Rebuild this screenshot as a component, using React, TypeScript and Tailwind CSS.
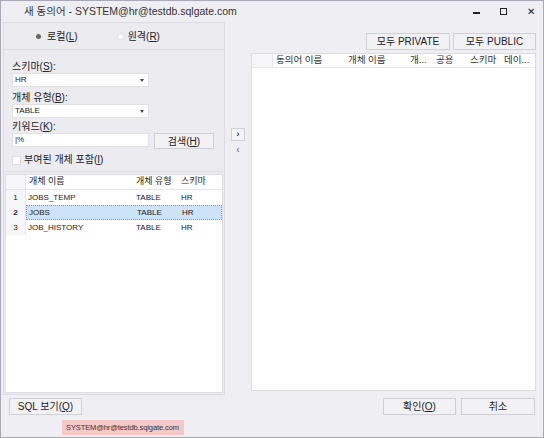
import React from "react";

const ko = "font-[family-name:'Liberation_Sans','Noto_Sans_CJK_KR',sans-serif]";

function Btn({ children, className = "" }: { children: React.ReactNode; className?: string }) {
  return (
    <div
      className={`flex items-center justify-center border border-[#cfcfd6] bg-[#f2f2f5] text-[10px] text-[#222] ${className}`}
    >
      <span>{children}</span>
    </div>
  );
}

function Select({ value }: { value: string }) {
  return (
    <div className="flex h-[14px] w-[137px] items-center justify-between border border-[#e2e2e6] bg-white pl-[2px] pr-[4px] text-[8px] text-[#222]">
      <span>{value}</span>
      <span className="mt-[1px] h-0 w-0 border-x-[2.5px] border-t-[3px] border-x-transparent border-t-[#444]" />
    </div>
  );
}

const leftRows = [
  { n: 1, name: "JOBS_TEMP", type: "TABLE", schema: "HR" },
  { n: 2, name: "JOBS", type: "TABLE", schema: "HR", sel: true },
  { n: 3, name: "JOB_HISTORY", type: "TABLE", schema: "HR" },
];

export default function App() {
  return (
    <div className={`flex h-[438px] w-[544px] flex-col border border-[#a9a9b6] bg-[#efeff3] ${ko}`}>
      {/* title bar */}
      <div className="flex h-[21px] items-center text-[10.5px] text-[#333]">
        <span className="ml-[23px]">새 동의어 - SYSTEM@hr@testdb.sqlgate.com</span>
        <div className="ml-auto flex items-center">
          <span className="mr-[20px] mt-[2px] h-[2px] w-[7px] bg-[#222]" />
          <span className="mr-[20px] h-[7px] w-[7px] border border-[#222]" />
          <span className="mr-[8px] text-[10px] leading-none text-[#222]">✕</span>
        </div>
      </div>

      {/* body */}
      <div className="flex h-[373px] pl-[2px]">
        {/* left panel */}
        <div className="flex w-[222px] flex-col border border-[#dcdce2] bg-[#ececf0]">
          <div className="flex h-[27px] shrink-0 items-center border-b border-[#dcdce2] text-[10px] text-[#222]">
            <span className="ml-[32px] flex items-center gap-[6px]">
              <span className="h-[5px] w-[5px] rounded-full bg-[#666]" />
              <span>
                로컬(<u>L</u>)
              </span>
            </span>
            <span className="ml-[39px] flex items-center gap-[4px]">
              <span className="h-[7px] w-[7px] rounded-full border border-[#ddd] bg-white" />
              <span>
                원격(<u>R</u>)
              </span>
            </span>
          </div>
          <div className="mx-[1px] mt-[1px] flex shrink-0 flex-col border-b border-[#dcdce2] px-[7px] pb-[5px] pt-[10px] text-[10px] text-[#222]">
            <span className="leading-[12px]">
              스키마(<u>S</u>):
            </span>
            <Select value="HR" />
            <span className="mt-[5px] leading-[12px]">
              개체 유형(<u>B</u>):
            </span>
            <Select value="TABLE" />
            <span className="mt-[3px] leading-[12px]">
              키워드(<u>K</u>):
            </span>
            <div className="flex h-[16px] items-start gap-[5px]">
              <div className="flex h-[14px] w-[137px] items-center border border-[#e2e2e6] bg-white pl-[2px] text-[8px]">
                |%
              </div>
              <Btn className="h-[16px] w-[60px]">
                검색(<u>H</u>)
              </Btn>
            </div>
            <div className="mt-[5px] flex h-[12px] items-center gap-[3px] leading-[12px]">
              <span className="h-[9px] w-[9px] border border-[#ddd] bg-white" />
              <span>
                부여된 개체 포함(<u>I</u>)
              </span>
            </div>
          </div>
          <div className="mx-[1px] mb-[1px] mt-[2px] flex-1 border border-[#dcdce2] bg-white text-[8px] text-[#222]">
            <div className="flex h-[15px] items-center border-b border-[#e6e6ea] text-[9px]">
              <span className="h-full w-[20px] border-r border-[#e6e6ea] bg-[#f6f6f8]" />
              <span className="w-[107px] pl-[3px]">개체 이름</span>
              <span className="w-[45px] pl-[3px]">개체 유형</span>
              <span className="pl-[3px]">스키마</span>
            </div>
            {leftRows.map((r) => (
              <div key={r.n} className="flex h-[15px] items-center">
                <span
                  className={`flex h-full w-[20px] items-center justify-center border-r border-[#e6e6ea] bg-[#f6f6f8] ${r.sel ? "font-bold" : ""}`}
                >
                  {r.n}
                </span>
                <div
                  className={`flex h-full flex-1 items-center ${r.sel ? "border border-dotted border-[#7b9ac0] bg-[#cde3f6]" : ""}`}
                >
                  <span className="w-[107px] pl-[2px]">{r.name}</span>
                  <span className="w-[45px] pl-[3px]">{r.type}</span>
                  <span className="pl-[3px]">{r.schema}</span>
                </div>
              </div>
            ))}
          </div>
        </div>

        {/* middle arrows */}
        <div className="flex w-[26px] flex-col items-center pt-[106px]">
          <div className="flex h-[13px] w-[14px] items-center justify-center border border-[#cfcfd6] bg-[#f4f4f6] text-[9px] font-bold leading-none text-[#333]">
            ›
          </div>
          <div className="mt-[4px] text-[10px] font-bold leading-none text-[#888]">‹</div>
        </div>

        {/* right panel */}
        <div className="mr-[7px] flex flex-1 flex-col">
          <div className="mt-[11px] flex justify-end gap-[3px]">
            <Btn className="h-[17px] w-[84px]">모두 PRIVATE</Btn>
            <Btn className="h-[17px] w-[83px]">모두 PUBLIC</Btn>
          </div>
          <div className="mb-[4px] mt-[3px] flex-1 border border-[#dcdce2] bg-white">
            <div className="flex h-[14px] items-center border-b border-[#e6e6ea] text-[9.5px] text-[#333]">
              <span className="h-full w-[21px] border-r border-[#e6e6ea] bg-[#f6f6f8]" />
              <span className="w-[72px] pl-[3px]">동의어 이름</span>
              <span className="w-[62px] pl-[3px]">개체 이름</span>
              <span className="w-[26px] pl-[3px]">개...</span>
              <span className="w-[34px] pl-[3px]">공용</span>
              <span className="w-[34px] pl-[3px]">스키마</span>
              <span className="pl-[3px]">데이...</span>
            </div>
          </div>
        </div>
      </div>

      {/* bottom */}
      <div className="mt-[3px] flex items-center text-[10px]">
        <Btn className="ml-[8px] h-[17px] w-[73px]">
          SQL 보기(<u>Q</u>)
        </Btn>
        <Btn className="ml-auto h-[17px] w-[73px]">
          확인(<u>O</u>)
        </Btn>
        <Btn className="ml-[5px] mr-[8px] h-[17px] w-[74px]">취소</Btn>
      </div>
      <div className="mt-[5px] flex">
        <span className="ml-[61px] flex h-[15px] w-[122px] items-center bg-[#f6c9c9] px-[4px] text-[7.5px] tracking-[-0.1px] text-[#333]">
          SYSTEM@hr@testdb.sqlgate.com
        </span>
      </div>
    </div>
  );
}
